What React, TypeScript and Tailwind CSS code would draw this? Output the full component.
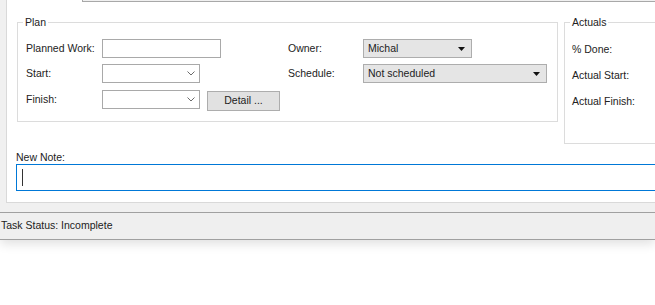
import React from "react";

const font = { fontFamily: '"Liberation Sans", Arial, sans-serif' };

function Chevron() {
  return (
    <svg width="8" height="5" viewBox="0 0 8 5" className="shrink-0">
      <polyline points="0.5,0.5 4,4 7.5,0.5" fill="none" stroke="#6b6b6b" strokeWidth="1" />
    </svg>
  );
}

function Triangle() {
  return (
    <svg width="7" height="4" viewBox="0 0 7 4" className="shrink-0">
      <polygon points="0,0 7,0 3.5,4" fill="#111" />
    </svg>
  );
}

function DateCombo() {
  return (
    <div className="flex h-[19px] w-[98px] items-center justify-end border border-[#a9a9a9] bg-white pr-[4px]">
      <Chevron />
    </div>
  );
}

function DropList({ value, width }: { value: string; width: string }) {
  return (
    <div className={`flex h-[19px] ${width} items-center justify-between border border-[#adadad] bg-[#e5e5e5] pl-[4px] pr-[6px]`}>
      <span>{value}</span>
      <Triangle />
    </div>
  );
}

function Group({ title, className, children }: { title: string; className: string; children?: React.ReactNode }) {
  return (
    <div className={`relative border border-[#dcdcdc] ${className}`}>
      <span className="absolute -top-[8px] left-[5px] bg-white px-[2px] leading-[14px]">{title}</span>
      {children}
    </div>
  );
}

export default function App() {
  return (
    <div className="h-[305px] w-[655px] overflow-hidden bg-white text-[10.5px] text-[#222]" style={font}>
      <div className="bg-[#f0f0f0] shadow-[0_4px_10px_rgba(0,0,0,0.12)]">
        {/* tab strip */}
        <div className="flex h-[2px]">
          <div className="w-[6px]" />
          <div className="w-[76px] border-l border-[#d9d9d9] bg-white" />
          <div className="flex-1 border-b border-l border-[#a8a8a8] bg-[#f0f0f0]" />
        </div>

        {/* tab page */}
        <div className="ml-[6px] border-b border-l border-[#d9d9d9] bg-white pt-[20px] pb-[11px]">
          <div className="flex items-start gap-[6px] pl-[10px]">
            <Group title="Plan" className="h-[100px] w-[541px] shrink-0 pl-[8px] pt-[16px]">
              <div className="flex">
                <div className="flex w-[262px] flex-col">
                  <div className="flex h-[19px] items-center">
                    <span className="w-[76px]">Planned Work:</span>
                    <div className="h-[19px] w-[119px] border border-[#a9a9a9] bg-white" />
                  </div>
                  <div className="mt-[6px] flex h-[19px] items-center">
                    <span className="w-[76px]">Start:</span>
                    <DateCombo />
                  </div>
                  <div className="mt-[7px] flex h-[19px] items-start">
                    <span className="w-[76px] leading-[19px]">Finish:</span>
                    <DateCombo />
                    <button className="ml-[7px] mt-[1px] h-[20px] w-[73px] border border-[#adadad] bg-[#e1e1e1] text-[10.5px]">
                      Detail ...
                    </button>
                  </div>
                </div>
                <div className="flex flex-col">
                  <div className="flex h-[19px] items-center">
                    <span className="w-[75px]">Owner:</span>
                    <DropList value="Michal" width="w-[109px]" />
                  </div>
                  <div className="mt-[6px] flex h-[19px] items-center">
                    <span className="w-[75px]">Schedule:</span>
                    <DropList value="Not scheduled" width="w-[184px]" />
                  </div>
                </div>
              </div>
            </Group>
            <Group title="Actuals" className="h-[122px] w-[140px] shrink-0 pl-[7px] pt-[19px]">
              <div className="flex flex-col gap-[12px] leading-[14px]">
                <span>% Done:</span>
                <span>Actual Start:</span>
                <span>Actual Finish:</span>
              </div>
            </Group>
          </div>

          <div className="mt-[7px] pl-[9px]">
            <div className="leading-[13px]">New Note:</div>
            <div className="flex h-[27px] w-[700px] items-center border border-[#0078d7] pl-[5px]">
              <div className="h-[17px] w-px bg-[#333]" />
            </div>
          </div>
        </div>

        <div className="h-[9px]" />

        {/* status bar */}
        <div className="flex h-[28px] items-center border-y border-[#a0a0a0] bg-[#efefef] pl-[1px]">
          Task Status: Incomplete
        </div>
      </div>
    </div>
  );
}
